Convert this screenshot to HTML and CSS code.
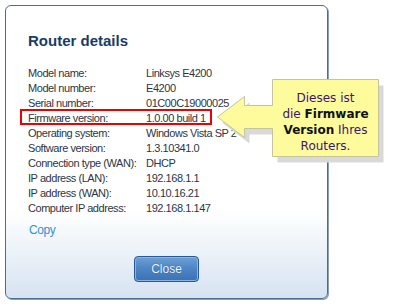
FILE: index.html
```html
<!DOCTYPE html>
<html>
<head>
<meta charset="utf-8">
<link rel="stylesheet" href="styles.css">
</head>
<body>
<div class="dialog">
  <h1 class="title">Router details</h1>
  <div class="details">
    <div class="row"><span class="label">Model name:</span><span class="value">Linksys E4200</span></div>
    <div class="row"><span class="label">Model number:</span><span class="value">E4200</span></div>
    <div class="row"><span class="label">Serial number:</span><span class="value">01C00C19000025</span></div>
    <div class="row hl"><span class="label">Firmware version:</span><span class="value">1.0.00 build 1</span></div>
    <div class="row"><span class="label">Operating system:</span><span class="value">Windows Vista SP 2</span></div>
    <div class="row"><span class="label">Software version:</span><span class="value">1.3.10341.0</span></div>
    <div class="row"><span class="label">Connection type (WAN):</span><span class="value">DHCP</span></div>
    <div class="row"><span class="label">IP address (LAN):</span><span class="value">192.168.1.1</span></div>
    <div class="row"><span class="label">IP address (WAN):</span><span class="value">10.10.16.21</span></div>
    <div class="row"><span class="label">Computer IP address:</span><span class="value">192.168.1.147</span></div>
  </div>
  <a class="copy">Copy</a>
  <div class="actions"><button class="btn">Close</button></div>
</div>
<div class="callout">
  <svg class="callout-shape" width="175" height="90" viewBox="215 77 175 90">
    <path class="shadow" transform="translate(5 6)" d="M272.5,79.5 H378.5 V156.5 H272.5 V128.5 H244.5 V137.5 L217.5,117 L244.5,96.5 V105.5 H272.5 Z"/>
    <path class="bubble" d="M272.5,79.5 H378.5 V156.5 H272.5 V128.5 H244.5 V137.5 L217.5,117 L244.5,96.5 V105.5 H272.5 Z"/>
  </svg>
  <div class="callout-text">Dieses ist<br>die <b>Firmware</b><br><b>Version</b> Ihres<br>Routers.</div>
</div>
</body>
</html>
```
FILE: styles.css
```css
html, body {
  margin: 0;
  padding: 0;
  background: #ffffff;
}
body {
  font-family: "Liberation Sans", Arial, sans-serif;
  position: relative;
  width: 394px;
  height: 305px;
  overflow: hidden;
}
.dialog {
  margin: 5px 0 0 5px;
  width: 323px;
  height: 294px;
  box-sizing: border-box;
  border: 1px solid #4d6d8e;
  border-radius: 6px;
  box-shadow: 1px 1px 0 #8aa0b6;
  padding: 26px 22px 0 22px;
  background: linear-gradient(to bottom, #ffffff 0, #ffffff 205px, #d6e3f1 100%);
}
.title {
  margin: 0;
  font-size: 15px;
  line-height: 18px;
  font-weight: bold;
  color: #183c66;
}
.details {
  margin-top: 16px;
}
.row {
  display: flex;
  font-size: 11px;
  line-height: 15px;
  letter-spacing: -0.45px;
  color: #2c3644;
  white-space: nowrap;
}
.label {
  width: 118px;
  flex: none;
}
.hl {
  position: relative;
}
.hl::after {
  content: "";
  position: absolute;
  left: -8px;
  top: -2px;
  width: 192px;
  height: 16px;
  box-sizing: border-box;
  border: 2px solid #ee0000;
}
.copy {
  display: block;
  margin-top: 7px;
  padding-left: 1px;
  font-size: 12px;
  line-height: 15px;
  letter-spacing: -0.4px;
  color: #2f93d6;
}
.actions {
  display: flex;
  justify-content: center;
  margin-top: 18px;
}
.btn {
  width: 65px;
  height: 26px;
  padding: 0;
  font-family: "Liberation Sans", Arial, sans-serif;
  font-size: 12px;
  color: #eef4fb;
  text-shadow: 0 0 1px #1e4f86;
  border: 1px solid #245a98;
  border-radius: 4px;
  background: linear-gradient(to bottom, #6f9fd4 0%, #4d84c4 50%, #3a72b5 100%);
  box-shadow: inset 0 0 0 1px #8db3e0;
}
.callout {
  position: absolute;
  left: 215px;
  top: 77px;
  width: 175px;
  height: 90px;
}
.callout-shape {
  position: absolute;
  left: 0;
  top: 0;
  display: block;
}
.shadow {
  fill: #d9d9d9;
}
.bubble {
  fill: #fdfb9b;
  stroke: #c6c49c;
  stroke-width: 1;
}
.callout-text {
  position: absolute;
  left: 57px;
  top: 13px;
  width: 107px;
  text-align: center;
  font-family: "DejaVu Sans", Verdana, sans-serif;
  font-size: 12px;
  line-height: 16px;
  color: #3a1670;
  white-space: nowrap;
}
.callout-text b {
  color: #111111;
}
```
